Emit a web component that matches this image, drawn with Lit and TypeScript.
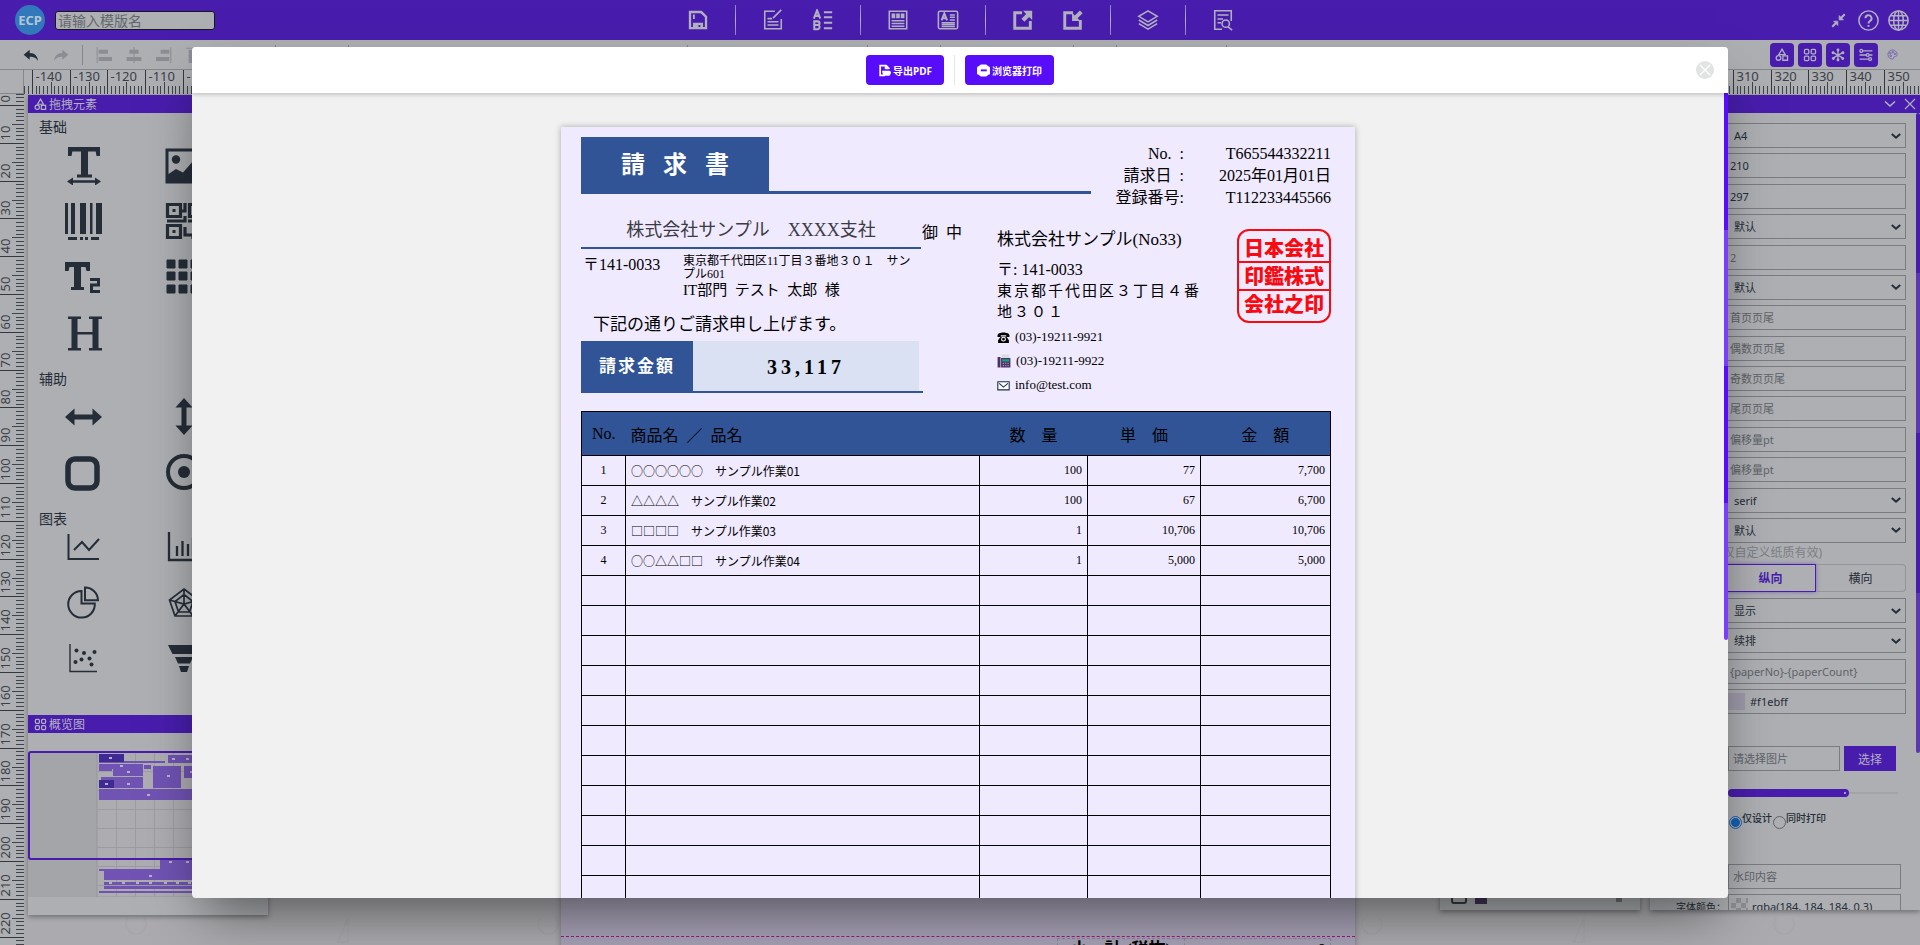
import { LitElement, html, svg, css, nothing, TemplateResult, SVGTemplateResult } from "lit";
import { customElement, state } from "lit/decorators.js";
import { classMap } from "lit/directives/class-map.js";

const ICONS: Record<string, SVGTemplateResult> = {
  save: svg`<path d="M2 2h14l6 6v14H2z M4.500 4.500v15h15V9l-4.600-4.500z" fill-rule="evenodd" fill="currentColor"/><path d="M6.500 15h11v5h-3v-2.500h-2V20h-6z M6.500 6h2v5h-2z" fill="currentColor"/>`,
  edit: svg`<path d="M14 2.500H3v19h18V11M12 10l9-9M6 10.500h5M6 14h12M6 17.500h12" class="ln"/>`,
  ab: svg`<path d="M2 10.500L5.500 1.500 9 10.500M3.200 7.500h4.600M2.500 13.500V22h4a2.300 2.300 0 0 0 0-4.500h-4 3.700a2 2 0 0 0 0-4zM13 3.500h9M13 9h9M13 15h9M13 21h9" class="ln bold"/>`,
  sheet: svg`<path d="M2.500 2.500h19v19h-19z" class="ln"/><path d="M5 5h4v5H5zM10 5h4v5h-4zM15 5h4v5h-4zM5 12h14v1.500H5zM5 15h14v1.500H5zM5 18h14v1.500H5z" fill="currentColor"/>`,
  article: svg`<rect x="1.500" y="2.500" width="21" height="19" rx="1.500" class="ln"/><path d="M5 12.500l3-7.500 3 7.500M6 10h4" class="ln bold"/><path d="M14 6.500h5.500M14 9h5.500M14 12h5.500M5 15h14.500M5 17h14.500M5 19h14.500" class="ln"/>`,
  exp: svg`<path d="M11 4H3v17h17v-8" class="ln heavy"/><path d="M12 2h10v10l-3.300-3.300-5.200 5.200-3.200-3.200 5.200-5.200z" fill="currentColor"/>`,
  imp: svg`<path d="M12 4H3v17h17v-9" class="ln heavy"/><path d="M11 13V4l3 3 5.500-5.500 3 3L17 10l3 3z" fill="currentColor"/>`,
  layers: svg`<path d="M12 2L22 8l-10 6L2 8zM2 12l10 6 10-6M2 16l10 6 10-6" class="ln"/>`,
  find: svg`<path d="M11 22H3V2h18v11M6 6.500h12M6 11h6M6 15h4M17.500 19.500L22 23" class="ln"/><circle cx="15" cy="16" r="4" class="ln"/>`,
  shrink: svg`<path d="M22 2l-6 6M2 22l6-6" class="ln heavy"/><path d="M13 4v7h7l-2.500-2.500-2-2zM11 20v-7H4l2.500 2.500 2 2z" fill="currentColor" stroke="currentColor"/>`,
  help: svg`<circle cx="12" cy="12" r="11" class="ln"/><path d="M8.500 9.500a3.500 3.500 0 1 1 5.200 3c-1.200.8-1.700 1.300-1.700 2.800M12 17v2" class="ln bold"/>`,
  globe: svg`<circle cx="12" cy="12" r="11" class="ln"/><ellipse cx="12" cy="12" rx="5.500" ry="11" class="ln"/><path d="M12 1v22M1 12h22M3 6.500h18M3 17.500h18" class="ln"/>`,
  undo: svg`<path d="M10 4v5c8 0 12 5 12.500 12C20 16 16 14.500 10 14.500V19L1 11.500z" fill="currentColor"/>`,
  redo: svg`<path d="M14 4v5C6 9 2 14 1.500 21 4 16 8 14.500 14 14.500V19l9-7.500z" fill="currentColor"/>`,
  left: svg`<path d="M1 0h1.500v24H1zM4 4h14v6H4zM4 15h20v6H4z" fill="currentColor"/>`,
  mid: svg`<path d="M11.200 0h1.600v24h-1.600zM5 4h14v6H5zM1 15h22v6H1z" fill="currentColor"/>`,
  right: svg`<path d="M21.500 0H23v24h-1.500zM7 4h13v6H7zM0 15h20v6H0z" fill="currentColor"/>`,
  top: svg`<path d="M0 1h24v1.500H0zM4 4h6v20H4zM15 4h6v14h-6z" fill="currentColor"/>`,
  shapes: svg`<path d="M12 2l5.500 9.500h-11z" class="ln bold"/><circle cx="6" cy="17" r="4" class="ln bold"/><path d="M13.500 13.500h8v7.500h-8z" class="ln bold"/>`,
  tiles: svg`<rect x="2.500" y="2.500" width="7.500" height="7.500" rx="2" class="ln bold"/><rect x="14" y="2.500" width="7.500" height="7.500" rx="2" class="ln bold"/><rect x="2.500" y="14" width="7.500" height="7.500" rx="2" class="ln bold"/><rect x="14" y="14" width="7.500" height="7.500" rx="2" class="ln bold"/>`,
  star: svg`<path d="M12 4v16M4 8l16 9M20 8L4 17" class="ln bold"/><g fill="currentColor"><circle cx="12" cy="3.500" r="2.500"/><circle cx="12" cy="20.500" r="2.500"/><circle cx="3.500" cy="8" r="2.500"/><circle cx="20.500" cy="8" r="2.500"/><circle cx="4" cy="18" r="2.500"/><circle cx="20" cy="18" r="2.500"/></g>`,
  sliders: svg`<path d="M7 5h16M1 12h12M18 12h5M1 19h15" class="ln bold"/><circle cx="4" cy="5" r="2.500" class="ln bold"/><circle cx="15" cy="12" r="2.500" class="ln bold"/><circle cx="19" cy="19" r="2.500" class="ln bold"/>`,
  palette: svg`<path d="M12 2a10 10 0 0 0 0 20c3 0 2-3 3-4.500 1-1.500 7 .5 7-5.500S17 2 12 2z" class="ln"/><circle cx="7" cy="9" r="2" class="ln"/><circle cx="13" cy="7" r="2" class="ln"/><circle cx="17.500" cy="11" r="1.500" class="ln"/><circle cx="8" cy="15" r="2" class="ln"/>`,
  down: svg`<path d="M2 7l10 9 10-9" class="ln thick"/>`,
  fold: svg`<path d="M2 7l10 9 10-9" class="ln heavy"/>`,
  close: svg`<path d="M2 2l20 20M22 2L2 22" class="ln bold"/>`,
  pdf: svg`<path d="M20 9v-1l-5-5H4v18h9" class="ln heavy"/><path d="M13 3v6h7M8 13h14l2 3-3 5H10z" fill="currentColor" stroke="currentColor"/>`,
  print: svg`<rect x="4" y="1" width="16" height="22" rx="4" fill="currentColor"/><rect x="0" y="4" width="24" height="16" rx="3" fill="currentColor"/><rect x="7" y="10" width="11" height="3.500" fill="#570cfa"/>`,
  phone: svg`<path d="M1 8c0-7 22-7 22 0v3h-6V8H7v3H1z" fill="#000"/><path d="M7 10h10l5 7v5H2v-5z" fill="#000"/><circle cx="12" cy="15" r="3.500" fill="none" stroke="#fff" stroke-width="2"/>`,
  fax: svg`<path d="M8 1h13v8H8z" fill="#d9dbe4"/><path d="M1 5h5v18H1zM7 7h16v16H7z" fill="#4b3365"/><path d="M9 9h12v4H9z" fill="#13a37c"/><path d="M10 15h2v2h-2zM14 15h2v2h-2zM18 15h2v2h-2zM10 19h2v2h-2zM14 19h2v2h-2zM18 19h2v2h-2z" fill="#a794c4"/>`,
  mail: svg`<path d="M1.500 5h21v15h-21z" fill="#fff" stroke="#1d2a52" stroke-width="2"/><path d="M4 8l8 7 8-7" fill="none" stroke="#1d2a52" stroke-width="2"/>`,
};

const ELEMENTS: Record<string, SVGTemplateResult> = {
  text: svg`<path d="M4 2h32v9h-3.500l-.8-4.500H24v23h4v3H13v-3h4v-23H8.300L7.500 11H4z" fill="currentColor"/><path d="M9 36.500h22" stroke="currentColor" stroke-width="2.500"/><path d="M3 36.500l6-4v8zM37 36.500l-6-4v8z" fill="currentColor"/>`,
  image: svg`<path d="M3 5h36v32H3z" fill="none" stroke="currentColor" stroke-width="3"/><circle cx="12" cy="14.500" r="4.200" fill="currentColor"/><path d="M3 30l9-6 7 3.500L30 15l8 6v16H3z" fill="currentColor"/>`,
  barcode: svg`<path d="M1 2h3v31H1zM7 2h4v31H7zM16 2h6v31h-6zM26 2h2.500v31H26zM32 2h6v31h-6zM4 36h9v3H4zM16 36h3v3h-3zM21 36h3v3h-3zM27 36h8v3h-8z" fill="currentColor"/>`,
  qr: svg`<path d="M3.500 3.500h13v12h-13zM3.500 24.500h13v12h-13zM25.500 3.500h12v12h-12zM21 2v8h-3M21 15v5H3M24 20h8v6h6M21 26v8h8v4" fill="none" stroke="currentColor" stroke-width="3.200"/><path d="M8.500 8h3v3h-3zM8.500 29h3v3h-3zM30 8h3v3h-3z" fill="currentColor"/>`,
  rich: svg`<path d="M1 5h25v9h-3.500l-1-4H17v20h3v3H7v-3h3V10H5.500l-1 4H1z" fill="currentColor"/><path d="M26 22.500h8.500v5.500h-7v6.500H36" fill="none" stroke="currentColor" stroke-width="3"/>`,
  grid: svg`<path d="M3 3h8v8H3zM15 3h8v8h-8zM27 3h8v8h-8zM3 15h8v8H3zM15 15h8v8h-8zM27 15h8v8h-8zM3 28h8v8H3zM15 28h8v8h-8zM27 28h8v8h-8z" fill="currentColor" stroke="currentColor" stroke-linejoin="round"/>`,
  head: svg`<path d="M4 3.500h13v2.500h-3.500v13h15V6H25V3.500h13V6h-3.500v29H38v2.500H25V35h3.500V21.500h-15V35H17v2.500H4V35h3.500V6H4z" fill="currentColor"/>`,
  horiz: svg`<path d="M1 20l9.500-8.500v6h18v-6L38 20l-9.500 8.500v-6h-18v6z" fill="currentColor"/>`,
  vert: svg`<path d="M20 1l8.500 9.500h-6v18h6L20 38l-8.500-9.500h6v-18h-6z" fill="currentColor"/>`,
  rect: svg`<rect x="4" y="6" width="29" height="29" rx="7" fill="none" stroke="currentColor" stroke-width="5.500"/>`,
  circle: svg`<circle cx="20" cy="19" r="16" fill="none" stroke="currentColor" stroke-width="4"/><circle cx="20" cy="19" r="6" fill="currentColor"/>`,
  line: svg`<path d="M4.500 5v25H35M10 21l8-8 7 8 10-11" fill="none" stroke="currentColor" stroke-width="2"/>`,
  bars: svg`<path d="M5 3v28h32M13 17v10M18.500 12v15M24 15v12M29 9v18" fill="none" stroke="currentColor" stroke-width="2.300"/>`,
  pie: svg`<path d="M17.500 6a13.300 13.300 0 1 0 13.300 12.500H17.500z" fill="none" stroke="currentColor" stroke-width="2"/><path d="M21 2.500v12.800h13A13 13 0 0 0 21 2.500z" fill="none" stroke="currentColor" stroke-width="2"/>`,
  radar: svg`<path d="M20 4l14.500 11-5.500 16H11L5.500 15zM20 9.500l9 7-3.500 10.500h-11L11 16.500zM20 4v15M5.500 15L20 19l14.500-4M11 31l9-12 9 12" fill="none" stroke="currentColor" stroke-width="1.700"/>`,
  dots: svg`<path d="M6 3v27.500h27" fill="none" stroke="currentColor" stroke-width="1.400"/><g fill="currentColor"><circle cx="12.500" cy="9.500" r="2"/><circle cx="20" cy="12" r="2"/><circle cx="30.500" cy="11" r="2"/><circle cx="17.500" cy="18.500" r="2"/><circle cx="25.500" cy="17.500" r="2"/><circle cx="11.500" cy="21" r="2"/><circle cx="27.500" cy="23.500" r="2"/></g>`,
  funnel: svg`<path d="M4 4h32l-4.500 9h-23zM11 16h18l-3 6.500H14zM15 25h10l-2 6h-6z" fill="currentColor"/>`,
};

const icon = (name: string, size: number) =>
  html`<svg class="icon" width=${size} height=${size} viewBox="0 0 24 24" aria-hidden="true">${ICONS[name]}</svg>`;

const iconStyles = css`
  .icon { display: block; flex: none; }
  .ln { fill: none; stroke: currentColor; stroke-width: 1.700; }
  .ln.bold { stroke-width: 2.200; }
  .ln.heavy { stroke-width: 3.200; }
  .ln.thick { stroke-width: 5; }
  button { font: inherit; cursor: pointer; }
`;

const MM = 3.78;

@customElement("mm-ruler")
class MmRuler extends LitElement {
  static properties = { vertical: { type: Boolean } };
  declare vertical: boolean;
  static styles = css`
    :host { display: block; overflow: hidden; background: #adafb2; }
    svg { display: block; width: 100%; height: 100%; }
    text { font: 13px "Noto Sans", sans-serif; fill: #3a4048; }
    path { stroke: #3f444b; stroke-width: 1; shape-rendering: crispEdges; fill: none; }
    .major { stroke: #33383f; }
  `;
  render() {
    const zero = this.vertical ? 11 : 537;
    const from = this.vertical ? -3 : -142;
    const to = this.vertical ? 226 : 362;
    let minor = "";
    let major = "";
    const labels: SVGTemplateResult[] = [];
    for (let i = from; i <= to; i++) {
      const p = Math.round(zero + i * MM) + 0.5;
      const tick = i % 10 === 0 ? 0 : i % 5 === 0 ? 12 : 16;
      const d = this.vertical ? `M${tick} ${p}H24` : `M${p} ${tick}V24`;
      if (tick) minor += d;
      else {
        major += d;
        labels.push(
          this.vertical
            ? svg`<text transform=${`translate(10 ${p - 3}) rotate(-90)`}>${i}</text>`
            : svg`<text x=${p + 3} y="11">${i}</text>`
        );
      }
    }
    return html`<svg aria-hidden="true"><path d=${minor}></path><path class="major" d=${major}></path>${labels}</svg>`;
  }
}

@customElement("top-bar")
class TopBar extends LitElement {
  static styles = [iconStyles, css`
    :host { display: grid; grid-template-columns: 1fr auto 1fr; align-items: center; height: 40px; background: #481dad; color: #b3b1c0; }
    .brand { display: flex; align-items: center; gap: 10px; padding-left: 15px; }
    .logo { width: 30px; height: 30px; border-radius: 50%; background: #3179bb; color: #b4c6d6; display: grid; place-items: center; font: bold 13px "Noto Sans", sans-serif; }
    input { width: 160px; height: 19px; box-sizing: border-box; border: 1px solid #15181c; border-radius: 3px; padding: 0 2px; background: #adafb2; font: 14px "Noto Sans", "Noto Sans CJK SC", sans-serif; color: #252d38; }
    input::placeholder { color: #62666c; }
    nav { display: flex; align-items: center; }
    button { border: 0; padding: 0; background: none; color: inherit; display: grid; place-items: center; }
    nav button { width: 50px; height: 40px; }
    .sep { width: 1px; height: 30px; margin: 0 12px; background: linear-gradient(#8e7fc0 0, #b3b1c0 50%, #8e7fc0); }
    .tools { display: flex; justify-content: flex-end; gap: 0; padding-right: 7px; }
    .tools button { width: 30px; height: 40px; }
  `];
  render() {
    const groups = [["save"], ["edit", "ab"], ["sheet", "article"], ["exp", "imp"], ["layers"], ["find"]];
    return html`
      <div class="brand"><span class="logo">ECP</span><input aria-label="模版名" placeholder="请输入模版名" /></div>
      <nav>
        ${groups.map((g, i) => html`${i ? html`<span class="sep"></span>` : nothing}${g.map((n) => html`<button aria-label=${n}>${icon(n, 22)}</button>`)}`)}
      </nav>
      <div class="tools">
        <button aria-label="shrink">${icon("shrink", 15)}</button>
        <button aria-label="help">${icon("help", 21)}</button>
        <button aria-label="language">${icon("globe", 21)}</button>
      </div>`;
  }
}

@customElement("tool-bar")
class ToolBar extends LitElement {
  static styles = [iconStyles, css`
    :host { display: flex; justify-content: space-between; height: 30px; box-sizing: border-box; background: #adafb2; border-bottom: 1px solid #85878a; }
    .group, .toggles { display: flex; align-items: center; }
    .group { padding-left: 16px; }
    button { border: 0; padding: 0; background: none; color: #8a8e94; width: 30px; height: 29px; display: grid; place-items: center; }
    .live { color: #252d38; }
    .sep { width: 1px; height: 20px; margin: 0 6px; background: #85878a; }
    .toggles { gap: 4px; padding-right: 20px; }
    .toggles button { width: 24px; height: 24px; border-radius: 4px; background: #481dad; color: #b3b1c0; }
    .toggles .plain { width: 16px; margin-left: 2px; background: none; color: #7157b5; }
  `];
  render() {
    const slots = [60, 326, 167, 60, 120, 30, 97];
    return html`
      <div class="group">
        <button class="live" aria-label="撤销">${icon("undo", 16)}</button>
        <button aria-label="重做">${icon("redo", 16)}</button>
        <span class="sep"></span>
        ${["left", "mid", "right", "top", "mid", "top"].map((n) => html`<button aria-label=${n}>${icon(n, 16)}</button>`)}
        <span class="sep"></span>
        ${slots.map((w) => html`<span style="width:${w}px"></span><span class="sep"></span>`)}
      </div>
      <div class="toggles">
        ${["shapes", "tiles", "star", "sliders"].map((n) => html`<button aria-label=${n}>${icon(n, 14)}</button>`)}
        <button class="plain" aria-label="主题">${icon("palette", 11)}</button>
      </div>`;
  }
}

@customElement("element-panel")
class ElementPanel extends LitElement {
  static styles = [iconStyles, css`
    :host { display: block; background: #adafb2; box-shadow: 0 2px 5px rgba(0, 0, 0, 0.35); color: #252d38; font: 14px "Noto Sans", "Noto Sans CJK SC", sans-serif; }
    h2 { display: flex; align-items: center; gap: 2px; height: 18px; margin: 0; padding-left: 6px; background: #481dad; color: #b3b1c0; font-size: 12px; font-weight: 400; }
    h3 { margin: 0; padding-left: 11px; font-size: 14px; line-height: 20px; font-weight: 400; }
    .library { height: 602px; padding-top: 4px; box-sizing: border-box; }
    .items { display: grid; grid-template-columns: 100px 100px; row-gap: 16px; justify-items: center; padding: 8px 0 16px 6px; }
    .items.tight { padding-top: 0; }
    .items svg { display: block; }
    .map { display: block; margin-top: 18px; width: 100%; height: 146px; background: #a3a5a8; }
    .foot { height: 18px; }
  `];
  items(names: string[], tight = false) {
    return html`<div class=${classMap({ items: true, tight })}>
      ${names.map((n) => html`<svg width="40" height="40" viewBox="0 0 40 40" aria-hidden="true">${ELEMENTS[n]}</svg>`)}
    </div>`;
  }
  render() {
    const soft = [[71, 10, 66, 2], [140, 4, 58, 8], [71, 13, 44, 5], [116, 14, 7, 4], [85, 18, 30, 7], [71, 18, 13, 2], [125, 15, 28, 22], [156, 15, 30, 12], [73, 26, 42, 3], [71, 29, 44, 8], [71, 38, 123, 11], [132, 108, 62, 11], [71, 118, 123, 2], [76, 120, 118, 9], [76, 131, 118, 3], [76, 135, 118, 3], [71, 140, 123, 2]];
    const marks = [[81, 6], [144, 7], [158, 7], [92, 14], [99, 20], [139, 24], [162, 20], [77, 32], [99, 32], [119, 43], [141, 110], [158, 110], [121, 124], [81, 131], [94, 131], [108, 131], [121, 131], [136, 131], [148, 131], [160, 131]];
    return html`
      <h2>${icon("shapes", 13)}拖拽元素</h2>
      <div class="library">
        <h3>基础</h3>${this.items(["text", "image", "barcode", "qr", "rich", "grid", "head"])}
        <h3>辅助</h3>${this.items(["horiz", "vert", "rect", "circle"])}
        <h3>图表</h3>${this.items(["line", "bars", "pie", "radar", "dots", "funnel"], true)}
      </div>
      <h2>${icon("tiles", 13)}概览图</h2>
      <svg class="map" aria-hidden="true">
        <rect x="69" y="0" width="131" height="146" fill="#adacb1" stroke="#9698a0" stroke-width="1"></rect>
        <path d="M88.500 0v146M107.500 0v146M126.500 0v146M145.500 0v146M164.500 0v146M69 20.500h131M69 39.500h131M69 58.500h131M69 77.500h131M69 96.500h131M69 115.500h131M69 134.500h131" stroke="#9c9da2"></path>
        ${soft.map(([x, y, w, h]) => svg`<rect x=${x} y=${y} width=${w} height=${h} fill="#7053b3"/>`)}
        <path d="M71 3h25v8H71zM71 29h15v8H71z" fill="#3f2a93"></path>
        ${marks.map(([x, y]) => svg`<rect x=${x} y=${y} width="3" height="2" fill="#b3b1c8"/>`)}
        <rect x="1" y="1" width="238" height="107" rx="2" fill="none" stroke="#481dad" stroke-width="2"></rect>
      </svg>
      <div class="foot"></div>`;
  }
}

type Field = { kind: "select" | "input"; value?: string; hint?: string };

@customElement("settings-panel")
class SettingsPanel extends LitElement {
  static styles = [iconStyles, css`
    :host { display: block; position: relative; background: #adafb2; box-shadow: 0 2px 5px rgba(0, 0, 0, 0.35); color: #252d38; font: 12px "Noto Sans", "Noto Sans CJK SC", sans-serif; overflow: hidden; }
    header { display: flex; align-items: center; justify-content: flex-end; gap: 8px; height: 18px; padding-right: 4px; background: #481dad; color: #b3b1c0; }
    .form { padding: 10px 14px 0 75px; }
    .stack { display: flex; flex-direction: column; justify-content: space-between; }
    .paper { height: 420px; }
    .page { height: 116px; margin-top: 6px; }
    .field { position: relative; display: flex; align-items: center; }
    .field > .icon { position: absolute; right: 5px; pointer-events: none; }
    .box { width: 100%; height: 25px; box-sizing: border-box; border: 1px solid #797c80; border-radius: 0; background: transparent; color: inherit; font: 11px "Noto Sans", "Noto Sans CJK SC", sans-serif; padding: 0 4px; }
    .box::placeholder { color: #5f6369; }
    .field select { appearance: none; padding-left: 8px; }
    .hint { display: block; margin-left: -6px; padding-bottom: 2px; line-height: 19px; color: #7d8085; white-space: nowrap; }
    .segment { display: flex; height: 28px; }
    .segment button { flex: 1; border: 1px solid #94969a; border-left: 0; border-radius: 0 4px 4px 0; background: none; color: inherit; padding: 0; }
    .segment .on { border: 1px solid #481dad; border-radius: 0; outline: 1px solid #481dad; outline-offset: -1px; color: #481dad; font-weight: 700; box-shadow: 0 0 4px #7c63bb; }
    .swatch { position: absolute; left: 3px; width: 17px; height: 17px; background: #9f9bac; }
    .colour .box { padding-left: 24px; }
    .extra { padding-left: 3px; }
    .pick { display: flex; gap: 4px; margin: 32px 10px 0 0; }
    .pick .box { flex: 1; min-width: 0; }
    .pick button { width: 52px; height: 25px; border: 0; padding: 0; background: #481dad; color: #b3b1c0; }
    input[type="range"] { appearance: none; display: block; width: 170px; height: 8px; margin: 18px 0 0; border-radius: 4px; background: linear-gradient(90deg, #481dad 118px, transparent 118px), linear-gradient(transparent 3px, #a2a4a7 3px, #a2a4a7 5px, transparent 5px); }
    input[type="range"]::-webkit-slider-thumb { appearance: none; width: 8px; height: 8px; border-radius: 50%; border: 3px solid #481dad; box-sizing: border-box; background: #c5bfd8; }
    .radios { display: flex; height: 26px; margin-top: 12px; }
    .radios label { display: flex; align-items: flex-start; line-height: 18px; font-size: 10px; font-weight: 500; }
    .radios input { appearance: none; flex: none; width: 13px; height: 13px; box-sizing: border-box; margin: 7px 0 0 1px; border: 1px solid #5f6368; border-radius: 50%; }
    .radios input:checked { border-color: #1660b4; background: radial-gradient(#1660b4 4px, transparent 5px); }
    .mark { display: block; width: 173px; margin-top: 29px; }
    .tint { position: relative; display: flex; align-items: center; margin-top: 5px; }
    .tint label { position: absolute; right: 100%; padding-right: 2px; font-size: 10px; white-space: nowrap; }
    .tint .box { width: 173px; padding-left: 23px; }
    .checker { width: 17px; height: 17px; background: conic-gradient(#8e9093 25%, #a9abae 0 50%, #8e9093 0 75%, #a9abae 0) 0 0 / 10px 10px; }
    .bar { position: absolute; right: 0; top: 18px; width: 4px; height: 640px; border-radius: 2px; background: linear-gradient(#481dad 25%, #5b39ad 25% 50%, #481dad 50% 75%, #5b39ad 75%); }
  `];
  @state() orientation = "纵向";
  field(f: Field) {
    return f.kind === "select"
      ? html`<div class="field"><select class="box" aria-label=${f.value}><option>${f.value}</option></select>${icon("down", 10)}</div>`
      : html`<div class="field"><input class="box" aria-label=${f.hint ?? f.value} .value=${f.value ?? ""} placeholder=${f.hint ?? ""} /></div>`;
  }
  render() {
    const s = (value: string): Field => ({ kind: "select", value });
    const i = (value: string): Field => ({ kind: "input", value });
    const h = (hint: string): Field => ({ kind: "input", hint });
    const paper = [s("A4"), i("210"), i("297"), s("默认"), h("2"), s("默认"), h("首页页尾"), h("偶数页页尾"), h("奇数页页尾"), h("尾页页尾"), h("偏移量pt"), h("偏移量pt"), s("serif"), s("默认")];
    return html`
      <header>${icon("fold", 12)}${icon("close", 12)}</header>
      <div class="form">
        <div class="stack paper">${paper.map((f) => this.field(f))}</div>
        <span class="hint">(仅自定义纸质有效)</span>
        <div class="segment">
          ${["纵向", "横向"].map((o) => html`<button class=${classMap({ on: o === this.orientation })} @click=${() => (this.orientation = o)}>${o}</button>`)}
        </div>
        <div class="stack page">
          ${[s("显示"), s("续排"), h("{paperNo}-{paperCount}")].map((f) => this.field(f))}
          <div class="field colour"><input class="box" aria-label="背景颜色" value="#f1ebff" /><span class="swatch"></span></div>
        </div>
        <div class="extra">
          <div class="pick"><input class="box" aria-label="图片" placeholder="请选择图片" /><button>选择</button></div>
          <input type="range" aria-label="透明度" min="0" max="100" value="70" />
          <div class="radios">
            <label><input type="radio" name="use" checked />仅设计</label>
            <label><input type="radio" name="use" />同时打印</label>
          </div>
          <input class="box mark" aria-label="水印内容" placeholder="水印内容" />
          <div class="tint"><label for="tint">字体颜色：</label><input class="box" id="tint" value="rgba(184, 184, 184, 0.3)" /><span class="swatch checker"></span></div>
        </div>
      </div>
      <span class="bar"></span>`;
  }
}

@customElement("invoice-sheet")
class InvoiceSheet extends LitElement {
  static styles = [iconStyles, css`
    :host { display: block; box-sizing: border-box; width: 794px; height: 1123px; padding: 10px 24px 0 20px; background: #f0eaff; color: #000; font: 16px "Liberation Serif", "Noto Sans CJK JP", serif; box-shadow: 0 0 6px rgba(0, 0, 0, 0.3); overflow: hidden; }
    p, h1, dl, dd { margin: 0; }
    .top { display: flex; justify-content: space-between; height: 57px; }
    .title { width: 510px; box-sizing: border-box; border-bottom: 3px solid #305496; }
    h1 { width: 188px; height: 54px; background: #305496; color: #fff; font-size: 24px; line-height: 56px; text-align: center; white-space: pre; }
    .meta { display: grid; grid-template-columns: auto 147px; padding-top: 6px; height: 66px; line-height: 22px; text-align: right; white-space: pre; }
    .parties { display: grid; grid-template-columns: 416px 1fr; }
    .customer { display: flex; align-items: center; margin-top: 18px; height: 37px; }
    .customer .name { width: 340px; height: 37px; box-sizing: border-box; border-bottom: 2px solid #305496; font-size: 18px; line-height: 37px; text-align: center; color: #3b3b44; }
    .customer .to { white-space: pre; padding-left: 1px; }
    .address { display: grid; grid-template-columns: 100px 230px; padding: 6px 0 0 2px; line-height: 20px; }
    .street { font-size: 12px; line-height: 13px; }
    .dept { font-size: 15px; line-height: 18px; white-space: pre; }
    .notice { margin: 14px 0 4px 12px; font-size: 17px; line-height: 24px; }
    .amount { display: flex; width: 342px; height: 52px; box-sizing: border-box; border-bottom: 2px solid #305496; font-weight: 700; line-height: 52px; text-align: center; }
    .amount dt { width: 112px; background: #305496; color: #fff; font-size: 17px; letter-spacing: 2px; }
    .amount dd { width: 226px; background: #d9e1f2; font-size: 20px; letter-spacing: 4px; }
    .issuer { display: flex; justify-content: space-between; align-items: flex-start; padding-top: 35px; }
    .issuer .text { width: 208px; }
    .company { font-size: 17px; line-height: 22px; margin-bottom: 9px; white-space: nowrap; }
    .zip { line-height: 20px; margin-bottom: 1px; white-space: pre; }
    .place { font-size: 15px; letter-spacing: 2px; line-height: 21px; margin-bottom: 2px; }
    .line { display: flex; align-items: center; gap: 5px; height: 24px; font-size: 13px; }
    .seal { width: 94px; height: 94px; box-sizing: border-box; border: 2px solid #f80a10; border-radius: 12px; color: #f80a10; font: 900 20px "Noto Sans CJK JP", sans-serif; display: grid; grid-template-rows: 30px 28px 1fr; text-align: center; line-height: 26px; overflow: hidden; }
    .seal span:first-child { line-height: 34px; }
    .seal span + span { border-top: 2px solid #f80a10; }
    table { width: 750px; margin-top: 14px; border-collapse: collapse; table-layout: fixed; font-size: 12px; }
    th, td { box-sizing: border-box; border: 1px solid #000; padding: 0 5px; height: 30px; font-weight: 400; text-align: right; }
    th { height: 44px; border-width: 1px 0; background: #305496; font-size: 16px; text-align: center; white-space: pre; }
    th:first-child { border-left-width: 1px; padding: 0; }
    th:last-child { border-right-width: 1px; }
    .item { text-align: left; }
    td.item { font-family: "Noto Sans CJK JP", sans-serif; line-height: 16px; }
    td.no { text-align: center; }
    .c1 { width: 44px; } .c2 { width: 354px; } .c3 { width: 108px; } .c4 { width: 113px; }
  `];
  render() {
    const rows: string[][] = [
      ["1", "○○○○○○　サンプル作業01", "100", "77", "7,700"],
      ["2", "△△△△　サンプル作業02", "100", "67", "6,700"],
      ["3", "□□□□　サンプル作業03", "1", "10,706", "10,706"],
      ["4", "○○△△□□　サンプル作業04", "1", "5,000", "5,000"],
      ...Array.from({ length: 14 }, () => ["", "", "", "", ""]),
    ];
    return html`
      <div class="top">
        <div class="title"><h1>請\u2002 求\u2002 書</h1></div>
        <div class="meta">
          <span>No.\u2002:</span><span>T665544332211</span>
          <span>請求日\u2002:</span><span>2025年01月01日</span>
          <span>登録番号:</span><span>T112233445566</span>
        </div>
      </div>
      <div class="parties">
        <div>
          <div class="customer"><span class="name">株式会社サンプル　XXXX支社</span><span class="to">御\u2002中</span></div>
          <div class="address">
            <span>〒141-0033</span>
            <div><p class="street">東京都千代田区11丁目３番地３０１　サンプル601</p><p class="dept">IT部門\u2002テスト\u2002太郎\u2002様</p></div>
          </div>
          <p class="notice">下記の通りご請求申し上げます。</p>
          <dl class="amount"><dt>請求金額</dt><dd>33,117</dd></dl>
        </div>
        <div class="issuer">
          <div class="text">
            <p class="company">株式会社サンプル(No33)</p>
            <p class="zip">〒: 141-0033</p>
            <p class="place">東京都千代田区３丁目４番地３０１</p>
            <p class="line">${icon("phone", 13)}(03)-19211-9921</p>
            <p class="line">${icon("fax", 14)}(03)-19211-9922</p>
            <p class="line">${icon("mail", 13)}info@test.com</p>
          </div>
          <div class="seal"><span>日本会社</span><span>印鑑株式</span><span>会社之印</span></div>
        </div>
      </div>
      <table>
        <colgroup><col class="c1" /><col class="c2" /><col class="c3" /><col class="c4" /><col /></colgroup>
        <thead><tr><th>No.</th><th class="item">商品名\u2002／\u2002品名</th><th>数　量</th><th>単　価</th><th>金　額</th></tr></thead>
        <tbody>
          ${rows.map(([no, item, ...nums]) => html`<tr><td class="no">${no}</td><td class="item">${item}</td>${nums.map((n) => html`<td>${n}</td>`)}</tr>`)}
        </tbody>
      </table>`;
  }
}

@customElement("preview-dialog")
class PreviewDialog extends LitElement {
  static styles = [iconStyles, css`
    :host { display: flex; flex-direction: column; background: #f1f1f1; border-radius: 4px; overflow: hidden; box-shadow: 0 25px 50px -12px rgba(0, 0, 0, 0.5); }
    header { position: relative; z-index: 1; flex: none; display: flex; align-items: center; justify-content: center; gap: 10px; height: 46px; background: #fff; box-shadow: 0 1px 5px rgba(0, 0, 0, 0.25); }
    .action { display: flex; align-items: center; gap: 2px; height: 30px; padding: 0 12px; border: 0; border-radius: 4px; background: #570cfa; color: #fff; font: bold 10px "Noto Sans", "Noto Sans CJK SC", sans-serif; }
    .rule { width: 1px; height: 30px; background: #e3e5e8; }
    .close { position: absolute; right: 14px; width: 18px; height: 18px; border: 0; padding: 0; border-radius: 50%; background: #e2e4e4; color: #fff; display: grid; place-items: center; }
    .view { flex: 1; min-height: 0; display: flex; overflow: hidden; }
    .desk { flex: 1; display: flex; justify-content: center; align-items: flex-start; padding-top: 34px; }
    .scroll { width: 4px; }
    .thumb { height: 547px; border-radius: 0 0 2px 2px; background: linear-gradient(#570cfa 25%, #7a3dfb 25% 50%, #570cfa 50% 75%, #7a3dfb 75%); }
  `];
  render(): TemplateResult {
    return html`
      <header>
        <button class="action">${icon("pdf", 13)}导出PDF</button>
        <span class="rule"></span>
        <button class="action">${icon("print", 13)}浏览器打印</button>
        <button class="close" aria-label="关闭">${icon("close", 12)}</button>
      </header>
      <div class="view">
        <div class="desk"><invoice-sheet></invoice-sheet></div>
        <div class="scroll"><div class="thumb"></div></div>
      </div>`;
  }
}

@customElement("app-root")
class AppRoot extends LitElement {
  static styles = css`
    :host { position: relative; display: grid; grid-template-rows: auto auto 24px 1fr; height: 100vh; overflow: hidden; background: #adafb2; }
    .rulers { display: grid; grid-template-columns: 24px 1fr; }
    .corner { box-sizing: border-box; border-right: 1px solid #85878a; border-bottom: 1px solid #85878a; }
    .work { display: grid; grid-template-columns: 24px 1fr; min-height: 0; overflow: hidden; }
    .canvas { position: relative; background: #abaaae; overflow: hidden; }
    .pattern { position: absolute; inset: 0; width: 100%; height: 100%; }
    .sheet { position: absolute; top: 11px; left: calc(50% - 411px); width: 794px; height: 1123px; box-sizing: border-box; background: #a6a1b5; box-shadow: 0 0 6px rgba(0, 0, 0, 0.3); padding-top: 831px; font: 17px/22px "Liberation Serif", "Noto Sans CJK JP", serif; }
    .totals { display: flex; justify-content: flex-end; border-top: 1px dashed #a3128b; padding: 1px 24px 0 0; }
    .totals span { box-sizing: border-box; width: 128px; border: 1px dashed #8b8895; text-align: center; font-weight: 700; }
    .totals span + span { width: 146px; border-left: 0; text-align: right; padding-right: 4px; font-weight: 400; }
    element-panel { position: absolute; left: 4px; top: 1px; width: 240px; }
    settings-panel { position: absolute; right: 0; top: 1px; width: 270px; height: 815px; }
    .fields { position: absolute; right: 280px; top: 1px; width: 200px; height: 815px; box-sizing: border-box; background: #adafb2; box-shadow: 0 2px 5px rgba(0, 0, 0, 0.35); display: flex; align-items: flex-end; gap: 8px; padding: 0 18px 6px 11px; }
    .fields i { width: 16px; height: 16px; box-sizing: border-box; border: 2px solid #343b45; border-radius: 3px; }
    .fields i + i { width: 12px; border: 0; border-radius: 0; background: #3f3157; }
    .fields i:last-child { width: 6px; height: 14px; margin: 0 0 2px auto; background: #6d7076; }
    preview-dialog { position: absolute; inset: 0; margin: auto; width: 80%; height: 90%; }
  `;
  render() {
    return html`
      <top-bar></top-bar>
      <tool-bar></tool-bar>
      <div class="rulers"><span class="corner"></span><mm-ruler></mm-ruler></div>
      <div class="work">
        <mm-ruler vertical></mm-ruler>
        <div class="canvas">
          <svg class="pattern" aria-hidden="true">
            <defs><pattern id="bits" width="412" height="412" patternUnits="userSpaceOnUse">
              <g fill="none" stroke="#a7a6aa" stroke-width="2"><circle cx="112" cy="6" r="10"></circle><path d="M324 0v24h-10z"></path></g>
            </pattern></defs>
            <rect y="824" width="100%" height="40" fill="url(#bits)"></rect>
          </svg>
          <div class="sheet"><div class="totals"><span>小　計 (税抜)</span><span>0</span></div></div>
          <div class="fields"><i></i><i></i><i></i></div>
          <element-panel></element-panel>
          <settings-panel></settings-panel>
        </div>
      </div>
      <preview-dialog></preview-dialog>`;
  }
}
